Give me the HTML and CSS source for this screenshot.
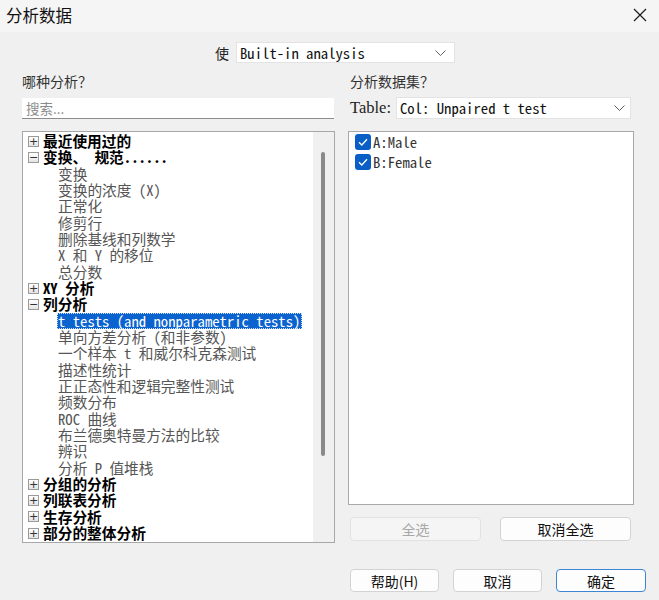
FILE: index.html
```html
<!DOCTYPE html>
<html lang="zh-CN">
<head>
<meta charset="utf-8">
<title>分析数据</title>
<link rel="stylesheet" href="styles.css">
</head>
<body>
<div class="dialog">
  <div class="titlebar">
    <span class="title">分析数据</span>
    <svg class="close" width="14" height="14" viewBox="0 0 14 14"><path d="M1 1 L13 13 M13 1 L1 13" stroke="#1a1a1a" stroke-width="1.2" fill="none"/></svg>
  </div>

  <div class="use-row">
    <span class="use-label">使</span>
    <div class="select select-use">
      <span class="select-text">Built-in analysis</span>
      <svg class="chev" width="11" height="6" viewBox="0 0 11 6"><path d="M0.5 0.5 L5.5 5.5 L10.5 0.5" stroke="#606060" stroke-width="1" fill="none"/></svg>
    </div>
  </div>

  <div class="columns">
    <div class="col-left">
      <div class="label">哪种分析？</div>
      <input class="search" type="text" placeholder="搜索...">
      <div class="tree">
        <div class="tree-list">
          <div class="row parent"><span class="exp">+</span><span class="txt">最近使用过的</span></div>
          <div class="row parent"><span class="exp">−</span><span class="txt">变换、 规范......</span></div>
          <div class="row child"><span class="txt">变换</span></div>
          <div class="row child"><span class="txt">变换的浓度 (X)</span></div>
          <div class="row child"><span class="txt">正常化</span></div>
          <div class="row child"><span class="txt">修剪行</span></div>
          <div class="row child"><span class="txt">删除基线和列数学</span></div>
          <div class="row child"><span class="txt">X 和 Y 的移位</span></div>
          <div class="row child"><span class="txt">总分数</span></div>
          <div class="row parent"><span class="exp">+</span><span class="txt">XY 分析</span></div>
          <div class="row parent"><span class="exp">−</span><span class="txt">列分析</span></div>
          <div class="row child selected"><span class="txt">t tests (and nonparametric tests)</span></div>
          <div class="row child"><span class="txt">单向方差分析 (和非参数)</span></div>
          <div class="row child"><span class="txt">一个样本 t 和威尔科克森测试</span></div>
          <div class="row child"><span class="txt">描述性统计</span></div>
          <div class="row child"><span class="txt">正正态性和逻辑完整性测试</span></div>
          <div class="row child"><span class="txt">频数分布</span></div>
          <div class="row child"><span class="txt">ROC 曲线</span></div>
          <div class="row child"><span class="txt">布兰德奥特曼方法的比较</span></div>
          <div class="row child"><span class="txt">辨识</span></div>
          <div class="row child"><span class="txt">分析 P 值堆栈</span></div>
          <div class="row parent"><span class="exp">+</span><span class="txt">分组的分析</span></div>
          <div class="row parent"><span class="exp">+</span><span class="txt">列联表分析</span></div>
          <div class="row parent"><span class="exp">+</span><span class="txt">生存分析</span></div>
          <div class="row parent"><span class="exp">+</span><span class="txt">部分的整体分析</span></div>
        </div>
        <div class="scrollbar"><div class="thumb"></div></div>
      </div>
    </div>

    <div class="col-right">
      <div class="label label-right">分析数据集？</div>
      <div class="table-row">
        <span class="table-label">Table:</span>
        <div class="select select-table">
          <span class="select-text">Col: Unpaired t test</span>
          <svg class="chev" width="11" height="6" viewBox="0 0 11 6"><path d="M0.5 0.5 L5.5 5.5 L10.5 0.5" stroke="#606060" stroke-width="1" fill="none"/></svg>
        </div>
      </div>
      <div class="datalist">
        <div class="check-row">
          <span class="cb"><svg width="16" height="16" viewBox="0 0 16 16"><path d="M4 8.3 L6.8 11 L12 5.2" stroke="#ffffff" stroke-width="1.3" fill="none"/></svg></span>
          <span class="check-text">A:Male</span>
        </div>
        <div class="check-row">
          <span class="cb"><svg width="16" height="16" viewBox="0 0 16 16"><path d="M4 8.3 L6.8 11 L12 5.2" stroke="#ffffff" stroke-width="1.3" fill="none"/></svg></span>
          <span class="check-text">B:Female</span>
        </div>
      </div>
      <div class="pair-buttons">
        <button class="btn btn-wide" disabled>全选</button>
        <button class="btn btn-wide">取消全选</button>
      </div>
    </div>
  </div>

  <div class="footer">
    <button class="btn btn-foot">帮助(H)</button>
    <button class="btn btn-foot">取消</button>
    <button class="btn btn-foot btn-default">确定</button>
  </div>
</div>
</body>
</html>
```

FILE: styles.css
```css
* { box-sizing: border-box; }

html, body {
  margin: 0;
  padding: 0;
}

body {
  width: 659px;
  height: 600px;
  overflow: hidden;
  background: #f0f0f0;
  color: #000;
  font-family: "Noto Sans CJK SC", "Noto Sans", sans-serif;
}

.dialog {
  display: flex;
  flex-direction: column;
  width: 659px;
  height: 600px;
}

.titlebar {
  height: 32px;
  background: #f5f5f5;
  display: flex;
  align-items: center;
  justify-content: space-between;
  padding: 0 12px 2px 6px;
}

.title {
  font-size: 16.5px;
  line-height: 20px;
  color: #111;
}

.close { display: block; }

.use-row {
  margin-top: 10px;
  height: 21px;
  display: flex;
  align-items: center;
  padding-left: 215px;
  gap: 7px;
}

.use-label {
  font-size: 14px;
  color: #222;
  line-height: 18px;
}

.select {
  height: 21px;
  background: #fff;
  border: 1px solid #e3e3e3;
  display: flex;
  align-items: center;
  justify-content: space-between;
  padding: 0 8px 0 3px;
}

.select-use { width: 219px; }

.select-text,
.row .txt,
.check-text {
  font-family: "Noto Sans Mono CJK SC", "Liberation Mono", "Noto Sans CJK SC", monospace;
  font-size: 14.7px;
  line-height: 16px;
  white-space: pre;
}

.select-text { color: #111; }

.chev { display: block; }

.columns {
  display: flex;
  gap: 13px;
  padding-left: 22px;
  margin-top: 9px;
}

.col-left {
  width: 313px;
  display: flex;
  flex-direction: column;
}

.col-right {
  width: 286px;
  display: flex;
  flex-direction: column;
}

.label {
  font-size: 14px;
  line-height: 18px;
  height: 18px;
  color: #333;
}

.label-right { padding-left: 2px; }

.search {
  margin-top: 8px;
  width: 312px;
  height: 21px;
  border: none;
  border-bottom: 1px solid #8c8c8c;
  background: #fff;
  padding: 0 4px;
  font-family: "Noto Sans CJK SC", sans-serif;
  font-size: 13.5px;
  outline: none;
}

.search::placeholder { color: #8a8a8a; }

.tree {
  margin-top: 12px;
  height: 412px;
  border: 1px solid #a7a7a7;
  background: #fff;
  display: flex;
}

.tree-list {
  flex: 1;
  padding: 1px 0 0 5px;
}

.row {
  height: 16.33px;
  display: flex;
  align-items: center;
  white-space: nowrap;
}

.exp {
  width: 11px;
  height: 11px;
  border: 1px solid #9a9a9a;
  background: linear-gradient(#ffffff, #e4e4e4);
  font-family: "DejaVu Sans", sans-serif;
  font-size: 11px;
  line-height: 9px;
  text-align: center;
  color: #333;
  margin-right: 4px;
  flex: none;
}

.parent .txt {
  font-weight: bold;
  color: #000;
}

.child .txt {
  margin-left: 29px;
  padding: 0 1px;
  color: #555;
}

.selected .txt {
  background: #0b63d0;
  color: #fff;
  border: 1px dotted #cfe0f7;
  height: 16.33px;
  line-height: 14px;
  padding: 0 1px 0 0;
  margin-left: 29px;
}

.scrollbar {
  width: 21px;
  background: #f0f0f0;
  position: relative;
  flex: none;
}

.thumb {
  position: absolute;
  left: 8px;
  top: 20px;
  width: 4px;
  height: 304px;
  border-radius: 2px;
  background: #8a8a8a;
}

.table-row {
  margin-top: 7px;
  height: 22px;
  display: flex;
  align-items: center;
  padding-left: 2px;
  gap: 4px;
}

.table-label {
  font-family: "Liberation Serif", serif;
  font-size: 16.5px;
  color: #222;
  width: 42px;
}

.select-table {
  width: 235px;
  height: 22px;
  padding-right: 5px;
}

.datalist {
  margin-top: 12px;
  height: 374px;
  border: 1px solid #a9a9a9;
  background: #fff;
  padding: 0 0 0 6px;
}

.check-row {
  display: flex;
  align-items: center;
  height: 20px;
  gap: 2px;
}

.cb {
  width: 16px;
  height: 16px;
  border-radius: 3px;
  background: #0a5fc6;
  display: block;
}

.cb svg { display: block; }

.check-text { color: #333; }

.pair-buttons {
  margin-top: 12px;
  padding-left: 2px;
  display: flex;
  gap: 19px;
}

.btn {
  font-family: "Noto Sans CJK SC", sans-serif;
  font-size: 14px;
  color: #111;
  background: #fdfdfd;
  border: 1px solid #d3d3d3;
  border-radius: 4px;
  padding: 0;
  line-height: 20px;
}

.btn-wide {
  width: 131px;
  height: 24px;
}

.btn:disabled {
  background: #f5f5f5;
  border-color: #e2e2e2;
  color: #a8a8a8;
}

.footer {
  margin-top: 26px;
  display: flex;
  justify-content: flex-end;
  gap: 14px;
  padding-right: 13px;
}

.btn-foot {
  width: 89px;
  height: 23px;
}

.btn-default {
  width: 90px;
  border-color: #3c86d4;
}
```
